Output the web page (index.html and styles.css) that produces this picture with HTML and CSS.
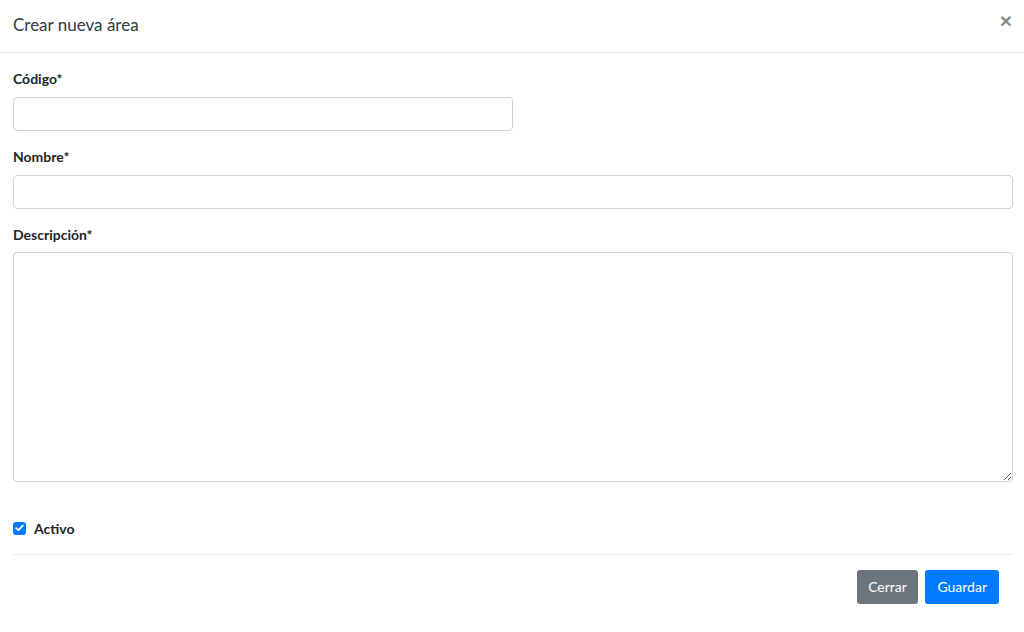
FILE: index.html
```html
<!DOCTYPE html>
<html lang="es">
<head>
<meta charset="utf-8">
<title>Crear nueva área</title>
<link rel="stylesheet" href="styles.css">
</head>
<body>
<div class="modal">
  <div class="modal-header">
    <h4 class="modal-title">Crear nueva área</h4>
    <button class="close" type="button" aria-label="Cerrar">×</button>
  </div>
  <div class="modal-body">
    <div class="group">
      <label class="label" for="codigo">Código*</label>
      <input class="input input-half" id="codigo" type="text">
    </div>
    <div class="group">
      <label class="label" for="nombre">Nombre*</label>
      <input class="input" id="nombre" type="text">
    </div>
    <div class="group">
      <label class="label label-tight" for="desc">Descripción*</label>
      <textarea class="input textarea" id="desc"></textarea>
    </div>
    <div class="check-row">
      <span class="checkbox"><svg width="9" height="8" viewBox="0 0 9 8"><path d="M1.2 4.2 L3.4 6.2 L7.8 1.6" fill="none" stroke="#fff" stroke-width="1.8" stroke-linecap="round" stroke-linejoin="round"/></svg></span>
      <span class="check-label">Activo</span>
    </div>
    <div class="divider"></div>
    <div class="actions">
      <button class="btn btn-secondary" type="button">Cerrar</button>
      <button class="btn btn-primary" type="button">Guardar</button>
    </div>
  </div>
</div>
</body>
</html>
```

FILE: styles.css
```css
* { box-sizing: border-box; }
html, body { margin: 0; padding: 0; background: #fff; }
body {
  font-family: "Source Sans Pro", Lato, "Liberation Sans", sans-serif;
  color: #212529;
  width: 1024px;
  height: 632px;
  overflow: hidden;
}
.modal { width: 1024px; }
.modal-header {
  height: 53px;
  display: flex;
  align-items: flex-start;
  justify-content: space-between;
  padding: 0 12px 0 13px;
  border-bottom: 1px solid #e9ecef;
}
.modal-title {
  margin: 0;
  margin-top: 16px;
  font-size: 17px;
  font-weight: 400;
  color: #343a40;
  line-height: 18px;
}
.close {
  border: 0;
  background: none;
  padding: 0;
  margin-top: 10px;
  font-family: "Liberation Sans", sans-serif;
  font-size: 21px;
  font-weight: 700;
  color: #8a8a8a;
  line-height: 21px;
  cursor: pointer;
}
.modal-body { padding: 16px 11px 0 13px; }
.group { display: flex; flex-direction: column; margin-bottom: 16px; }
.label {
  font-size: 14px;
  font-weight: 700;
  line-height: 20px;
  color: #212529;
  margin-bottom: 8px;
}
.label-tight { margin-bottom: 7px; }
.input {
  display: block;
  width: 1000px;
  height: 34px;
  border: 1px solid #ced4da;
  border-radius: 4px;
  background: #fff;
  font: inherit;
  padding: 6px 12px;
}
.input-half { width: 500px; }
.textarea { height: 230px; resize: vertical; }
.check-row {
  display: flex;
  align-items: center;
  gap: 8px;
  margin-top: 33px;
  height: 26px;
}
.checkbox {
  width: 13px;
  height: 13px;
  border-radius: 3px;
  background: #007bff;
  display: flex;
  align-items: center;
  justify-content: center;
}
.check-label { font-size: 14px; font-weight: 700; color: #212529; }
.divider {
  width: 1000px;
  height: 1px;
  background: #e9ecef;
  margin-top: 13px;
}
.actions {
  display: flex;
  justify-content: flex-end;
  gap: 7px;
  padding: 15px 14px 0 0;
  width: 1000px;
}
.btn {
  height: 34px;
  border: 0;
  border-radius: 3px;
  color: #fff;
  font-family: inherit;
  font-size: 14px;
  padding: 0 12px;
  line-height: 34px;
}
.btn-secondary { background: #6c757d; padding: 0 11.5px; }
.btn-primary { background: #007bff; }
```
